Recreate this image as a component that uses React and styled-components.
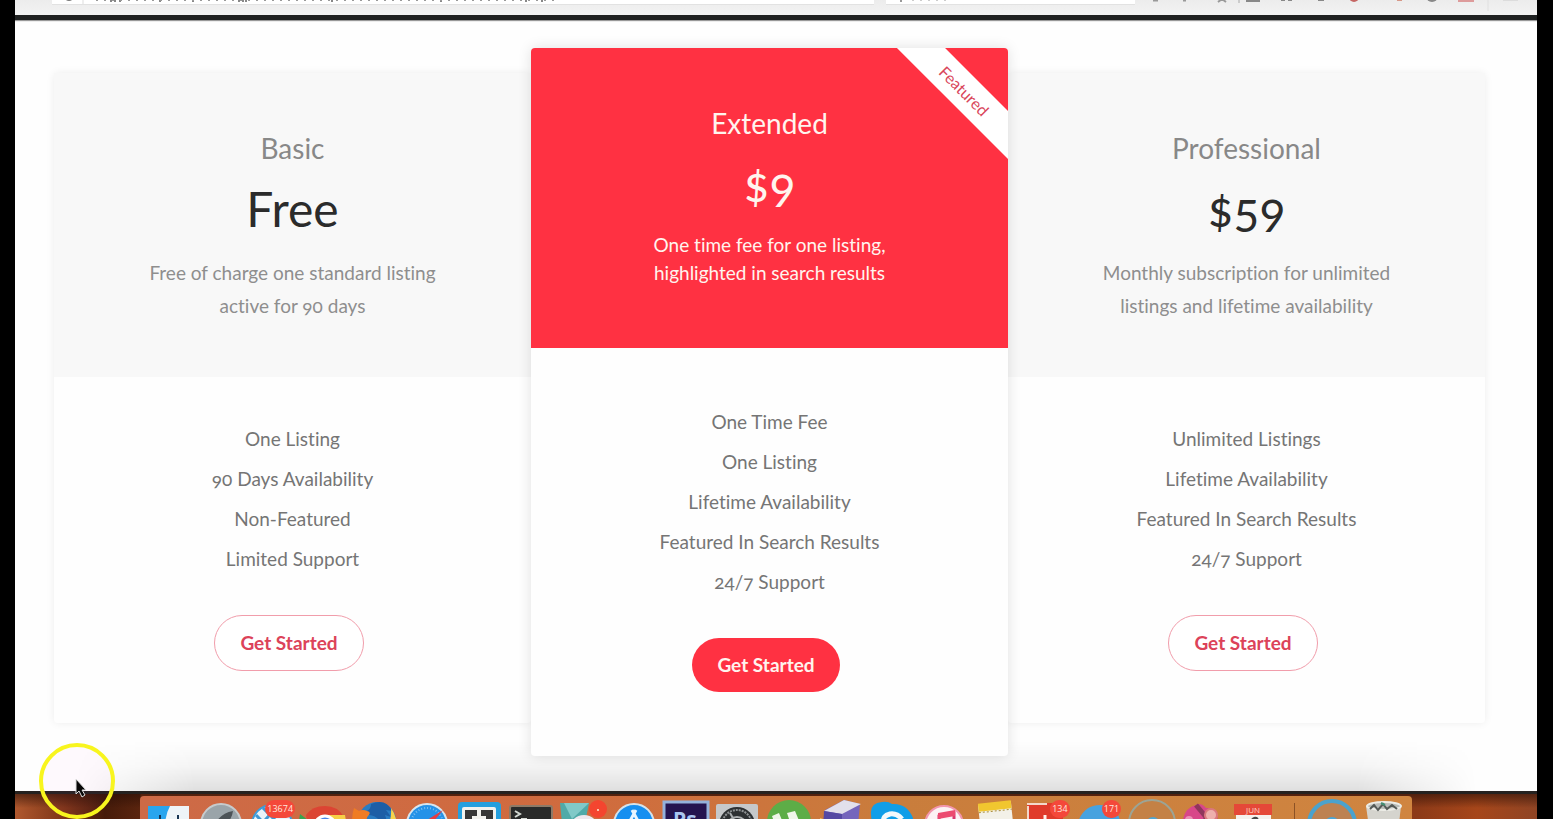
import React from "react";
import styled, { createGlobalStyle, css } from "styled-components";

const GlobalStyle = createGlobalStyle`
  * { box-sizing: border-box; }
  body {
    margin: 0;
    background: #000;
    font-family: Lato, "Open Sans", sans-serif;
    font-variant-ligatures: none;
  }
  h2, p, ul { margin: 0; padding: 0; font-weight: 400; }
  svg { display: block; }
`;

const Screen = styled.div`
  position: relative;
  display: flex;
  flex-direction: column;
  min-height: 100vh;
  margin: 0 16px 0 15px;
  overflow: hidden;
`;

const Toolbar = styled.header`
  display: flex;
  flex: none;
  height: 20px;
  padding: 0 16px 0 37px;
  background: linear-gradient(#ececec, #f3f3f3);
  border-bottom: 5px solid #1f2121;
  box-shadow: 0 1px 1px #999;
  position: relative;
  z-index: 1;
`;

const Field = styled.div`
  flex: ${(p) => p.$grow} 1 0;
  height: 5px;
  margin-right: 12px;
  background: #fff;
  border-bottom: 1px solid #e2e2e2;
  overflow: hidden;
`;

const ToolIcons = styled.div`
  flex: none;
  width: 374px;
`;

const Page = styled.main`
  position: relative;
  flex: 1 0 auto;
  padding: 28px 52px 35px 39px;
  background: #fefefe;
  &::after {
    content: "";
    position: absolute;
    left: 60px;
    right: 60px;
    bottom: 0;
    height: 50px;
    background: linear-gradient(transparent, rgba(0, 0, 0, 0.04) 50%, rgba(0, 0, 0, 0.12));
    mask-image: linear-gradient(90deg, transparent, #000 120px, #000 calc(100% - 120px), transparent);
  }
`;

const Plans = styled.section`
  position: relative;
  z-index: 1;
  display: grid;
  grid-template-columns: repeat(3, minmax(0, 1fr));
  align-items: start;
`;

const Name = styled.h2`
  font-size: 28px;
  line-height: 34px;
  color: #888;
`;

const Price = styled.p`
  margin: 14px 0 17px;
  font-size: 48px;
  line-height: 60px;
  color: #2b2b2b;
  font-variant-numeric: oldstyle-nums;
`;

const Summary = styled.p`
  max-width: 300px;
  margin: 0 auto;
  font-size: 19px;
  line-height: 33px;
  color: #8e8e8e;
  font-variant-numeric: oldstyle-nums;
`;

const Head = styled.div`
  height: 304px;
  padding-top: 58px;
  background: #f8f8f8;
`;

const Features = styled.ul`
  list-style: none;
  padding-top: 42px;
  font-size: 19px;
  line-height: 40px;
  color: #757575;
  font-variant-numeric: oldstyle-nums;
`;

const Start = styled.button`
  height: 56px;
  margin: 36px 7px 52px 0;
  padding: 0 25px;
  border: 1px solid #f19dab;
  border-radius: 28px;
  background: #fff;
  color: #dc4359;
  font: 700 19px/24px Lato, "Open Sans", sans-serif;
  cursor: pointer;
`;

const Card = styled.article`
  position: relative;
  margin-top: 25px;
  text-align: center;
  background: #fefefe;
  border-radius: 4px;
  box-shadow: 0 0 8px rgba(0, 0, 0, 0.07);
  ${(p) =>
    p.$featured &&
    css`
      z-index: 1;
      margin-top: 0;
      box-shadow: 0 0 14px rgba(0, 0, 0, 0.12);
      ${Head} {
        position: relative;
        height: 300px;
        overflow: hidden;
        border-radius: 4px 4px 0 0;
        background: #ff3142;
      }
      ${Name}, ${Price}, ${Summary} { color: #fff4ee; }
      ${Summary} { line-height: 28px; max-width: 260px; }
      ${Features} { padding-top: 54px; }
      ${Start} {
        height: 54px;
        margin-bottom: 64px;
        border: 0;
        background: #ff3142;
        color: #fff4ee;
      }
    `}
`;

const Ribbon = styled.span`
  position: absolute;
  top: 26px;
  right: -56px;
  width: 200px;
  transform: rotate(45deg);
  background: #fff;
  color: #d9465a;
  font-size: 16px;
  line-height: 34px;
`;

const Desktop = styled.footer`
  flex: none;
  height: 28px;
  padding: 2px 125px 0;
  border-top: 3px solid #262220;
  overflow: hidden;
  background:
    linear-gradient(rgba(40, 14, 6, 0.6), transparent 14px),
    linear-gradient(90deg, #b0582e 0, #7c3416 50px, #461b0a 90px, #5a240e 125px, transparent 126px),
    linear-gradient(90deg, #8c3a18, #8c3a18 calc(100% - 120px), #a6461a calc(100% - 60px), #8f4424);
`;

const Dock = styled.nav`
  display: flex;
  align-items: flex-start;
  height: 60px;
  padding: 7px 7px 0 8px;
  border-radius: 4px;
  background: linear-gradient(90deg, #cd6a47, #d06b3e 35%, #c97d3c 60%, #d08540);
`;

const Apps = styled.div`
  display: flex;
  justify-content: space-between;
  flex: ${(p) => (p.$wide ? "1" : "none")};
  gap: ${(p) => (p.$wide ? "0" : "10px")};
`;

const Divider = styled.span`
  width: 1px;
  height: 40px;
  margin: 0 16px 0 19px;
  background: #8c5226;
`;

const DockItem = styled.span`
  position: relative;
  width: 42px;
  height: 42px;
  svg { overflow: visible; }
`;

const Badge = styled.span`
  position: absolute;
  top: -3px;
  left: ${(p) => (p.$long ? "14px" : "24px")};
  min-width: 19px;
  padding: 0 2px;
  border-radius: 9px;
  background: #f4483a;
  color: #ffe6df;
  font: 9px/18px "Open Sans", sans-serif;
  text-align: center;
`;

const Pointer = styled.svg`
  position: absolute;
  left: 24px;
  bottom: 0;
  z-index: 2;
`;

const drawings = {
  finder: (
    <>
      <rect y="3" width="41" height="42" fill="#29a5ee" />
      <path d="M22 3H41V42H17V24Q17 12 22 3Z" fill="#eef4f8" />
      <path d="M12 12v8M30 12v8" stroke="#173553" strokeWidth="2" />
    </>
  ),
  rocket: (
    <>
      <circle cx="21" cy="21" r="20" fill="#9aa4a9" stroke="#c6cbcd" strokeWidth="2" />
      <path d="M33 8Q22 10 16 19L12 20L9 25L17 24L25 31V23Q32 16 33 8Z" fill="#4c5357" />
    </>
  ),
  globe: (
    <>
      <circle cx="21" cy="22" r="20" fill="#e9f3fa" stroke="#3b9ddc" strokeWidth="2" />
      <path d="M5 12L28 36M12 5L31 24M7 25L24 6" stroke="#4198d3" strokeWidth="3" />
    </>
  ),
  chrome: (
    <>
      <path d="M3 12Q9 3 22 3Q35 3 41 14L38 24H5Z" fill="#dc4433" />
      <path d="M-3 11L14 24H-5Z" fill="#36a450" />
      <path d="M22 12H42L44 24H22Z" fill="#f7cf46" />
      <circle cx="22" cy="23" r="10" fill="#4a86e8" stroke="#fff" strokeWidth="3" />
    </>
  ),
  firefox: (
    <>
      <circle cx="22" cy="18" r="19" fill="#2a7cc2" />
      <path d="M16 1Q31 -5 37 8L31 7L36 14L30 12Q34 22 26 22Q24 13 14 12Q10 12 12 8Q16 6 16 1Z" fill="#1d5ea6" />
      <path d="M-1 5L4 8Q8 6 12 8Q17 9 13 13Q11 15 12 20Q18 25 24 22Q18 31 8 27Q10 34 20 38H2Q-6 20 -1 5Z" fill="#ef7c24" />
      <path d="M36 5Q47 20 36 38L30 30Q37 18 36 5Z" fill="#f9d34b" />
    </>
  ),
  safari: (
    <>
      <circle cx="21" cy="21" r="20" fill="#2492e8" stroke="#d8e5ee" strokeWidth="2" />
      <circle cx="21" cy="21" r="16" fill="none" stroke="#79bdf0" strokeWidth="2" strokeDasharray="1 2" />
      <path d="M37 7L23 24L18 19Z" fill="#e73c41" />
      <path d="M18 19L23 24L7 36Z" fill="#f3f3f3" />
    </>
  ),
  brackets: (
    <>
      <rect y="-1" width="43" height="46" rx="4" fill="#249fde" />
      <rect x="4" y="4" width="34" height="38" rx="2" fill="#f2f2ee" />
      <path d="M7 7H19V13H14V34H19V38H7ZM23 7H35V38H23V34H28V13H23Z" fill="#373737" />
    </>
  ),
  terminal: (
    <>
      <rect y="3" width="42" height="42" rx="2" fill="#292a29" stroke="#8d7a67" strokeWidth="2" />
      <path d="M5 8L10 11L5 14M11 16H17" fill="none" stroke="#d3d9d2" strokeWidth="2" />
    </>
  ),
  slack: (
    <>
      <path d="M-1 0H28L20 40H3Z" fill="#50aaa8" />
      <path d="M3 0H28L11 16Z" fill="#80c9c8" />
      <circle cx="23" cy="27" r="15" fill="#eee8ee" />
      <circle cx="24" cy="27" r="10" fill="#493355" />
      <circle cx="37" cy="6" r="9" fill="#f4452f" />
      <circle cx="37" cy="7" r="1" fill="#fff0d7" />
    </>
  ),
  store: (
    <>
      <circle cx="21" cy="21" r="20" fill="#168ff0" stroke="#d5e3eb" strokeWidth="2" />
      <path d="M23 7L12 27M19 7L31 29M7 23H35" stroke="#e8f5ff" strokeWidth="3" />
    </>
  ),
  photo: (
    <>
      <rect x="-1" y="-1" width="44" height="46" fill="#241450" stroke="#94b2dc" strokeWidth="3" />
      <text x="8" y="24" fill="#a9c5f2" fontFamily="Open Sans" fontSize="21" fontWeight="700">Ps</text>
    </>
  ),
  gear: (
    <>
      <rect y="1" width="42" height="42" rx="2" fill="#c5c8ca" />
      <circle cx="21" cy="22" r="18" fill="#2c3032" />
      <circle cx="21" cy="22" r="15" fill="none" stroke="#8d9193" strokeWidth="2" strokeDasharray="2 1" />
      <circle cx="21" cy="24" r="10" fill="none" stroke="#acb0b2" strokeWidth="2" />
      <path d="M21 22L14 10M21 22H36M21 22L12 35" stroke="#a8acae" strokeWidth="2" />
    </>
  ),
  torrent: (
    <>
      <circle cx="21" cy="19" r="22" fill="#5dad47" />
      <path d="M4 13L11 10L18 27Q24 30 24 25L19 10L27 8L35 27L38 36H12Z" fill="#f0f5e9" />
    </>
  ),
  box: (
    <>
      <path d="M5 7L24 -3L40 1L37 32L20 38L2 28Z" fill="#7565bc" />
      <path d="M4 8L24 -3L41 1L22 11Z" fill="#e2e0eb" />
      <path d="M4 8L22 11V37L3 28Z" fill="#5549a3" />
      <path d="M0 15L19 21V38H0Z" fill="#edc863" />
    </>
  ),
  skype: (
    <>
      <path d="M0 11Q-1 0 11 -1Q17 -2 21 1Q36 0 42 15V40H2Z" fill="#109ee8" />
      <path d="M31 16Q26 10 19 11Q11 13 13 19Q16 23 29 24" fill="none" stroke="#f3f9fc" strokeWidth="5" />
    </>
  ),
  music: (
    <>
      <circle cx="21" cy="22" r="19" fill="#fcf2f4" stroke="#f296ae" strokeWidth="2" />
      <path d="M16 31V13L31 10V28" fill="none" stroke="#d93970" strokeWidth="3" />
      <path d="M15 10L32 7V13L15 16Z" fill="#ec4b70" />
    </>
  ),
  notes: (
    <g transform="rotate(-6 21 20)">
      <rect x="5" y="0" width="33" height="42" fill="#f3f1e8" />
      <rect x="5" y="-1" width="33" height="8" fill="#f1c62f" />
      <path d="M5 8H38" stroke="#a98c38" strokeDasharray="2 2" />
    </g>
  ),
  red: (
    <>
      <path d="M1 0H37V40H1Z" fill="#e03b2b" />
      <path d="M2 3V38M1 1H21" stroke="#f3d8ca" strokeWidth="2" />
      <path d="M19 12V26M11 20H28" stroke="#fff0e8" strokeWidth="3" />
    </>
  ),
  chat: <path d="M0 19Q6 2 22 2Q40 2 43 22V40H-2Z" fill="#47a2df" />,
  ring: (
    <>
      <circle cx="23" cy="20" r="23" fill="#c48145" stroke="#9ca495" strokeWidth="2" />
      <circle cx="24" cy="21" r="7" fill="#4fa6d3" />
    </>
  ),
  flower: (
    <>
      <path d="M2 16Q5 4 15 2Q20 -1 25 5Q36 4 37 19L33 37H4Z" fill="#d84789" />
      <path d="M15 2L25 14L24 30" fill="none" stroke="#8f365c" strokeWidth="5" />
      <circle cx="30" cy="12" r="6" fill="#edb0ad" stroke="#db777d" strokeWidth="2" />
      <circle cx="8" cy="17" r="4" fill="#eb91b5" />
    </>
  ),
  calendar: (
    <>
      <rect x="3" y="1" width="35" height="42" fill="#f5f1ed" />
      <rect x="1" y="1" width="38" height="11" fill="#e54838" />
      <text x="13" y="10" fill="#ffd5c6" fontFamily="Open Sans" fontSize="8">JUN</text>
      <path d="M18 18Q21 13 25 16" fill="none" stroke="#464646" strokeWidth="2" />
    </>
  ),
  blueRing: (
    <>
      <circle cx="21" cy="21" r="23" fill="#bd8252" stroke="#4aa2cd" strokeWidth="4" />
      <circle cx="21" cy="22" r="8" fill="#4aa6d8" />
    </>
  ),
  trash: (
    <>
      <path d="M3 3L8 38H34L38 3Z" fill="#d5d4ce" />
      <ellipse cx="21" cy="3" rx="17" ry="4" fill="#b9bcb8" stroke="#ecece6" strokeWidth="2" />
      <path d="M7 6L11 2L15 7L20 1L24 6L29 2L34 6" fill="none" stroke="#555a57" strokeWidth="2" />
      <path d="M18 0L22 2" stroke="#438e73" strokeWidth="2" />
    </>
  ),
};

const apps = [
  ["finder"], ["rocket"], ["globe", "13674"], ["chrome"], ["firefox"], ["safari"],
  ["brackets"], ["terminal"], ["slack"], ["store"], ["photo"], ["gear"], ["torrent"],
  ["box"], ["skype"], ["music"], ["notes"], ["red", "134"], ["chat", "171"],
  ["ring"], ["flower"], ["calendar"],
];

function DockApp({ icon, count }) {
  return (
    <DockItem>
      <svg width="42" height="42" viewBox="0 0 42 42" aria-hidden="true">{drawings[icon]}</svg>
      {count && <Badge $long={count.length > 3}>{count}</Badge>}
    </DockItem>
  );
}

function Plan({ name, price, summary, features, featured }) {
  return (
    <Card $featured={featured}>
      <Head>
        {featured && <Ribbon>Featured</Ribbon>}
        <Name>{name}</Name>
        <Price>{price}</Price>
        <Summary>{summary[0]}<br />{summary[1]}</Summary>
      </Head>
      <Features>
        {features.map((f) => <li key={f}>{f}</li>)}
      </Features>
      <Start type="button">Get Started</Start>
    </Card>
  );
}

const plans = [
  {
    name: "Basic",
    price: "Free",
    summary: ["Free of charge one standard listing", "active for 90 days"],
    features: ["One Listing", "90 Days Availability", "Non-Featured", "Limited Support"],
  },
  {
    name: "Extended",
    price: "$9",
    featured: true,
    summary: ["One time fee for one listing,", "highlighted in search results"],
    features: ["One Time Fee", "One Listing", "Lifetime Availability", "Featured In Search Results", "24/7 Support"],
  },
  {
    name: "Professional",
    price: "$59",
    summary: ["Monthly subscription for unlimited", "listings and lifetime availability"],
    features: ["Unlimited Listings", "Lifetime Availability", "Featured In Search Results", "24/7 Support"],
  },
];

export default function App() {
  return (
    <>
      <GlobalStyle />
      <Screen>
        <Toolbar>
          <Field $grow={33}>
            <svg width="520" height="4" fill="none" aria-hidden="true">
              <path d="M13 -2Q17 2 21 -2" stroke="#777" strokeWidth="2" />
              <path d="M31 0V4" stroke="#ddd" />
              <path d="M59 0V2M63 0V2M68 0V2M108 0V2M141 0V2M187 0V2M191 0V2M194 0V2M280 0V2M389 0V2M474 0V2M490 0V2" stroke="#888" strokeWidth="2" />
              <path d="M44 0H503" stroke="#999" strokeWidth="2" strokeDasharray="2 6" />
            </svg>
          </Field>
          <Field $grow={10}>
            <svg width="80" height="4" aria-hidden="true">
              <path d="M15 0V2" stroke="#999" strokeWidth="2" />
              <path d="M26 0H60" stroke="#999" strokeDasharray="2 6" />
            </svg>
          </Field>
          <ToolIcons>
            <svg width="374" height="14" fill="none" aria-hidden="true">
              <path d="M6 0H11M36 0H39" stroke="#999" strokeWidth="3" />
              <path d="M71 2L75 -1L79 2M75 -2V1" stroke="#999" strokeWidth="2" />
              <path d="M92 0V3" stroke="#aaa" />
              <path d="M99 1H113M134 0H138M141 0H145M171 0H177" stroke="#888" strokeWidth="2" />
              <circle cx="207" cy="-3" r="5" fill="#c56663" />
              <path d="M250 0H255" stroke="#d79888" strokeWidth="2" />
              <circle cx="285" cy="-4" r="6" fill="#888" />
              <path d="M311 0H327" stroke="#dd9b9b" strokeWidth="4" />
              <path d="M341 0V11" stroke="#e0e0e0" />
              <path d="M356 0H371" stroke="#ccc" />
            </svg>
          </ToolIcons>
        </Toolbar>
        <Page>
          <Plans>
            {plans.map((p) => <Plan key={p.name} {...p} />)}
          </Plans>
        </Page>
        <Desktop>
          <Dock aria-label="Dock">
            <Apps $wide>
              {apps.map(([icon, count]) => <DockApp key={icon} icon={icon} count={count} />)}
            </Apps>
            <Divider />
            <Apps>
              <DockApp icon="blueRing" />
              <DockApp icon="trash" />
            </Apps>
          </Dock>
        </Desktop>
        <Pointer width="76" height="76" viewBox="0 0 76 76" aria-hidden="true">
          <circle cx="38" cy="38" r="36" fill="#ff5ae6" fillOpacity="0.03" stroke="#f8f51e" strokeWidth="4" />
          <path d="M37 36V51L40 48L43 54L46 52L43 47H47Z" fill="#080808" stroke="#ddd" strokeWidth="1" />
        </Pointer>
      </Screen>
    </>
  );
}
